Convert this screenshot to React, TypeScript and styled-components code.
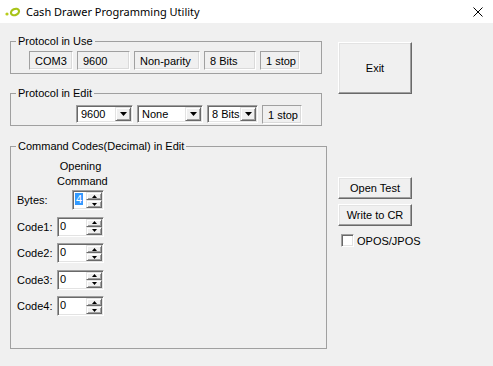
import React from "react";
import styled, { createGlobalStyle } from "styled-components";

const GlobalStyle = createGlobalStyle`
  html, body {
    margin: 0;
    padding: 0;
  }
  body {
    background: #f0f0f0;
    font-family: "Liberation Sans", Arial, sans-serif;
    font-size: 11px;
    color: #000;
  }
`;

const Window = styled.div`
  width: 493px;
  height: 366px;
  background: #f0f0f0;
  overflow: hidden;
`;

const TitleBar = styled.div`
  height: 23px;
  background: #fff;
  display: flex;
  align-items: center;
  padding-left: 4px;
  box-sizing: border-box;
`;

const Title = styled.span`
  font-family: "Noto Sans", sans-serif;
  font-size: 11px;
  margin-left: 4px;
  color: #000;
`;

const Close = styled.div`
  margin-left: auto;
  margin-right: 10px;
  display: flex;
  align-items: center;
`;

const Body = styled.div`
  display: flex;
  padding: 12px 0 0 10px;
`;

const LeftColumn = styled.div`
  display: flex;
  flex-direction: column;
`;

const Group = styled.fieldset<{ $width: number; $mt?: number; $height?: number }>`
  box-sizing: border-box;
  width: ${p => p.$width}px;
  ${p => (p.$height ? `height: ${p.$height}px;` : "")}
  margin: ${p => p.$mt ?? 0}px 0 0 0;
  padding: 0;
  border: 1px solid #a0a0a0;
  min-width: 0;
`;

const Legend = styled.legend`
  padding: 0 2px;
  margin-left: 5px;
  line-height: 13px;
`;

const FieldRow = styled.div<{ $pad: string }>`
  display: flex;
  gap: 4px;
  padding: ${p => p.$pad};
`;

const StaticField = styled.div<{ $w: number }>`
  box-sizing: border-box;
  width: ${p => p.$w}px;
  height: 19px;
  display: flex;
  align-items: center;
  padding-left: 5px;
  border: 1px solid;
  border-color: #a0a0a0 #ffffff #ffffff #a0a0a0;
  box-shadow: inset -1px -1px 0 #dadada;
`;

const Combo = styled.div<{ $w: number }>`
  box-sizing: border-box;
  width: ${p => p.$w}px;
  height: 18px;
  display: flex;
  align-items: stretch;
  background: #fff;
  border: 1px solid;
  border-color: #a0a0a0 #ffffff #ffffff #a0a0a0;
  box-shadow: inset 1px 1px 0 #696969, inset -1px -1px 0 #e3e3e3;
  padding: 1px;
`;

const ComboText = styled.span`
  flex: 1;
  display: flex;
  align-items: center;
  padding-left: 3px;
`;

const ArrowButton = styled.span<{ $w?: number }>`
  box-sizing: border-box;
  width: ${p => p.$w ?? 16}px;
  display: flex;
  align-items: center;
  justify-content: center;
  background: #f0f0f0;
  border: 1px solid;
  border-color: #e3e3e3 #696969 #696969 #e3e3e3;
  box-shadow: inset 1px 1px 0 #fff, inset -1px -1px 0 #a0a0a0;
`;

const Caption = styled.div`
  width: 47px;
  margin: 6px 0 0 46px;
  text-align: center;
  line-height: 15px;
`;

const CodeGrid = styled.div`
  display: grid;
  grid-template-columns: 40px 47px;
  row-gap: 6.5px;
  margin: 1px 0 0 6px;
`;

const CodeLabel = styled.span`
  display: flex;
  align-items: center;
  height: 20px;
`;

const SpinBox = styled.div<{ $w: number }>`
  box-sizing: border-box;
  justify-self: end;
  width: ${p => p.$w}px;
  height: 20px;
  display: flex;
  background: #fff;
  border: 1px solid;
  border-color: #a0a0a0 #ffffff #ffffff #a0a0a0;
  box-shadow: inset 1px 1px 0 #696969, inset -1px -1px 0 #e3e3e3;
  padding: 1px;
`;

const SpinText = styled.span`
  flex: 1;
  padding: 1px 0 0 1px;
  line-height: 13px;
`;

const Selected = styled.span`
  background: #3399ff;
  color: #fff;
  padding: 0 1px;
`;

const Spinner = styled.span`
  width: 16px;
  display: flex;
  flex-direction: column;
`;

const SpinButton = styled(ArrowButton)`
  width: 16px;
  flex: 1;
`;

const RightColumn = styled.div`
  display: flex;
  flex-direction: column;
  margin-left: 11px;
`;

const Button = styled.button<{ $h: number; $mt: number }>`
  box-sizing: border-box;
  width: 74px;
  height: ${p => p.$h}px;
  margin-top: ${p => p.$mt}px;
  padding: 0;
  font-family: "Liberation Sans", Arial, sans-serif;
  font-size: 11px;
  color: #000;
  background: #f0f0f0;
  border: 1px solid;
  border-color: #ffffff #696969 #696969 #ffffff;
  box-shadow: inset -1px -1px 0 #a0a0a0, inset 1px 1px 0 #e3e3e3;
`;

const CheckRow = styled.label`
  display: flex;
  align-items: center;
  margin: 8px 0 0 3px;
  height: 13px;
`;

const CheckBox = styled.span`
  box-sizing: border-box;
  width: 13px;
  height: 13px;
  background: #fff;
  border: 1px solid;
  border-color: #a0a0a0 #ffffff #ffffff #a0a0a0;
  box-shadow: inset 1px 1px 0 #696969, inset -1px -1px 0 #e3e3e3;
  margin-right: 3px;
`;

const DownArrow = () => (
  <svg width="7" height="4" viewBox="0 0 7 4">
    <path d="M0 0H7L3.5 4Z" fill="#000" />
  </svg>
);

const TinyArrow = ({ up }: { up?: boolean }) => (
  <svg width="5" height="3" viewBox="0 0 5 3">
    <path d={up ? "M0 3H5L2.5 0Z" : "M0 0H5L2.5 3Z"} fill="#000" />
  </svg>
);

const AppIcon = () => (
  <svg width="18" height="12" viewBox="0 0 18 12">
    <circle cx="3" cy="8" r="1.6" fill="#b8cc1c" />
    <ellipse cx="11" cy="6" rx="4.2" ry="3" fill="none" stroke="#a8c418" strokeWidth="2.2" transform="rotate(-25 11 6)" />
  </svg>
);

const ComboBox = ({ w, value, arrowW }: { w: number; value: string; arrowW?: number }) => (
  <Combo $w={w}>
    <ComboText>{value}</ComboText>
    <ArrowButton $w={arrowW}>
      <DownArrow />
    </ArrowButton>
  </Combo>
);

const Spin = ({ w, children }: { w: number; children: React.ReactNode }) => (
  <SpinBox $w={w}>
    <SpinText>{children}</SpinText>
    <Spinner>
      <SpinButton>
        <TinyArrow up />
      </SpinButton>
      <SpinButton>
        <TinyArrow />
      </SpinButton>
    </Spinner>
  </SpinBox>
);

export default function App() {
  return (
    <Window>
      <GlobalStyle />
      <TitleBar>
        <AppIcon />
        <Title>Cash Drawer Programming Utility</Title>
        <Close>
          <svg width="10" height="10" viewBox="0 0 10 10">
            <path d="M0.5 0.5L9.5 9.5M9.5 0.5L0.5 9.5" stroke="#000" strokeWidth="1" />
          </svg>
        </Close>
      </TitleBar>
      <Body>
        <LeftColumn>
          <Group $width={312}>
            <Legend>Protocol in Use</Legend>
            <FieldRow $pad="3px 0 3px 18px">
              <StaticField $w={44}>COM3</StaticField>
              <StaticField $w={53}>9600</StaticField>
              <StaticField $w={66}>Non-parity</StaticField>
              <StaticField $w={52}>8 Bits</StaticField>
              <StaticField $w={40}>1 stop</StaticField>
            </FieldRow>
          </Group>
          <Group $width={312} $mt={13}>
            <Legend>Protocol in Edit</Legend>
            <FieldRow $pad="5px 0 1px 65px">
              <ComboBox w={57} value="9600" />
              <ComboBox w={66} value="None" />
              <ComboBox w={51} value="8 Bits" />
              <StaticField $w={40}>1 stop</StaticField>
            </FieldRow>
          </Group>
          <Group $width={317} $mt={14} $height={209}>
            <Legend>Command Codes(Decimal) in Edit</Legend>
            <Caption>
              Opening
              <br />
              Command
            </Caption>
            <CodeGrid>
              <CodeLabel>Bytes:</CodeLabel>
              <Spin w={32}>
                <Selected>4</Selected>
              </Spin>
              <CodeLabel>Code1:</CodeLabel>
              <Spin w={47}>0</Spin>
              <CodeLabel>Code2:</CodeLabel>
              <Spin w={47}>0</Spin>
              <CodeLabel>Code3:</CodeLabel>
              <Spin w={47}>0</Spin>
              <CodeLabel>Code4:</CodeLabel>
              <Spin w={47}>0</Spin>
            </CodeGrid>
          </Group>
        </LeftColumn>
        <RightColumn>
          <Button $h={52} $mt={7}>Exit</Button>
          <Button $h={22} $mt={83}>Open Test</Button>
          <Button $h={22} $mt={5}>Write to CR</Button>
          <CheckRow>
            <CheckBox />
            OPOS/JPOS
          </CheckRow>
        </RightColumn>
      </Body>
    </Window>
  );
}
